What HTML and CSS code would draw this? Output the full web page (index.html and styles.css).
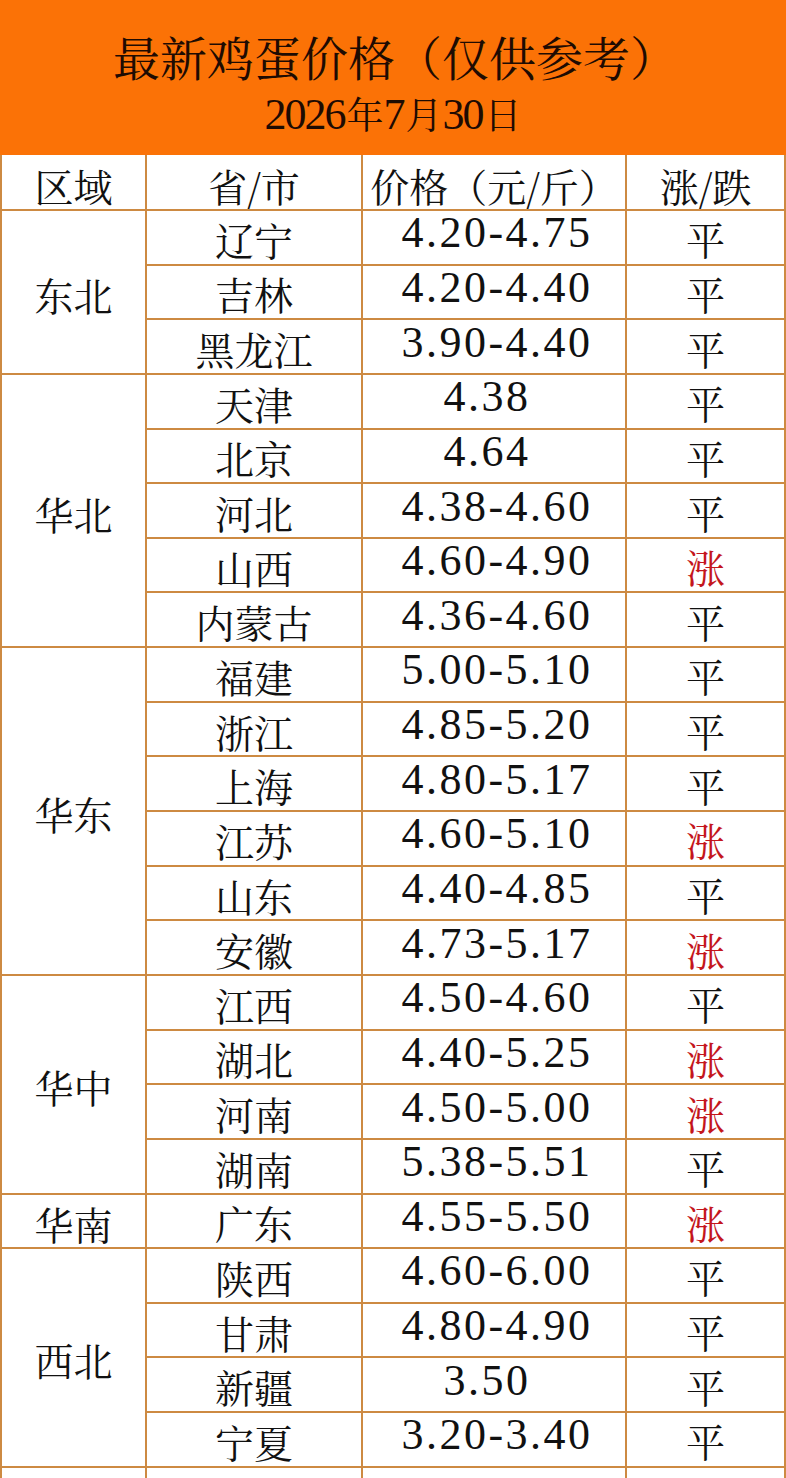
FILE: index.html
```html
<!DOCTYPE html>
<html lang="zh-CN">
<head>
<meta charset="utf-8">
<title>最新鸡蛋价格</title>
<link rel="stylesheet" href="styles.css">
</head>
<body>
<div class="banner">
  <div class="title">最新鸡蛋价格（仅供参考）</div>
  <div class="date"><span class="dnum">2026</span>年<span class="dnum">7</span>月<span class="dnum">30</span>日</div>
</div>
<div class="sheet">
  <div class="cell head">区域</div>
  <div class="cell head">省/市</div>
  <div class="cell head">价格（元/斤）</div>
  <div class="cell head">涨/跌</div>

  <div class="cell region r3">东北</div>
  <div class="cell prov">辽宁</div><div class="cell price">4.20-4.75</div><div class="cell trend">平</div>
  <div class="cell prov">吉林</div><div class="cell price">4.20-4.40</div><div class="cell trend">平</div>
  <div class="cell prov">黑龙江</div><div class="cell price">3.90-4.40</div><div class="cell trend">平</div>

  <div class="cell region r5">华北</div>
  <div class="cell prov">天津</div><div class="cell price single">4.38</div><div class="cell trend">平</div>
  <div class="cell prov">北京</div><div class="cell price single">4.64</div><div class="cell trend">平</div>
  <div class="cell prov">河北</div><div class="cell price">4.38-4.60</div><div class="cell trend">平</div>
  <div class="cell prov">山西</div><div class="cell price">4.60-4.90</div><div class="cell trend up">涨</div>
  <div class="cell prov">内蒙古</div><div class="cell price">4.36-4.60</div><div class="cell trend">平</div>

  <div class="cell region r6">华东</div>
  <div class="cell prov">福建</div><div class="cell price">5.00-5.10</div><div class="cell trend">平</div>
  <div class="cell prov">浙江</div><div class="cell price">4.85-5.20</div><div class="cell trend">平</div>
  <div class="cell prov">上海</div><div class="cell price">4.80-5.17</div><div class="cell trend">平</div>
  <div class="cell prov">江苏</div><div class="cell price">4.60-5.10</div><div class="cell trend up">涨</div>
  <div class="cell prov">山东</div><div class="cell price">4.40-4.85</div><div class="cell trend">平</div>
  <div class="cell prov">安徽</div><div class="cell price">4.73-5.17</div><div class="cell trend up">涨</div>

  <div class="cell region r4">华中</div>
  <div class="cell prov">江西</div><div class="cell price">4.50-4.60</div><div class="cell trend">平</div>
  <div class="cell prov">湖北</div><div class="cell price">4.40-5.25</div><div class="cell trend up">涨</div>
  <div class="cell prov">河南</div><div class="cell price">4.50-5.00</div><div class="cell trend up">涨</div>
  <div class="cell prov">湖南</div><div class="cell price">5.38-5.51</div><div class="cell trend">平</div>

  <div class="cell region">华南</div>
  <div class="cell prov">广东</div><div class="cell price">4.55-5.50</div><div class="cell trend up">涨</div>

  <div class="cell region r4">西北</div>
  <div class="cell prov">陕西</div><div class="cell price">4.60-6.00</div><div class="cell trend">平</div>
  <div class="cell prov">甘肃</div><div class="cell price">4.80-4.90</div><div class="cell trend">平</div>
  <div class="cell prov">新疆</div><div class="cell price single">3.50</div><div class="cell trend">平</div>
  <div class="cell prov">宁夏</div><div class="cell price">3.20-3.40</div><div class="cell trend">平</div>

  <div class="cell region"></div>
  <div class="cell prov"></div><div class="cell price"></div><div class="cell trend"></div>
</div>
</body>
</html>
```

FILE: styles.css
```css
html, body {
  margin: 0;
  padding: 0;
  overflow: hidden;
  background: #ffffff;
}

body {
  width: 786px;
  font-family: "Noto Serif CJK SC", "Noto Sans CJK SC", sans-serif;
  color: #111111;
}

.banner {
  height: 155px;
  background: #fb7206;
  display: flex;
  flex-direction: column;
  align-items: center;
  box-sizing: border-box;
  padding-top: 33px;
  color: #1e0b02;
}

.title {
  font-size: 47px;
  line-height: 46px;
  letter-spacing: 0;
  white-space: nowrap;
  padding-left: 4px;
}

.date {
  margin-top: 13px;
  font-size: 37px;
  line-height: 42px;
  white-space: nowrap;
}

.dnum {
  font-family: "Liberation Serif", serif;
  font-size: 44px;
  letter-spacing: -2px;
  margin-right: 2px;
}

.sheet {
  display: grid;
  grid-template-columns: 143px 214px 262px 157px;
  grid-template-rows: 54px repeat(24, 52.65px);
  gap: 2px;
  padding: 0 2px;
  background: #cd8a42;
}

.cell {
  background: #ffffff;
  display: flex;
  align-items: center;
  justify-content: center;
  font-size: 39px;
  line-height: 40px;
  white-space: nowrap;
}

.head {
  padding-top: 6px;
  box-sizing: border-box;
}

.region {
  padding-top: 4px;
  box-sizing: border-box;
}

.r3 { grid-row: span 3; }
.r4 { grid-row: span 4; }
.r5 { grid-row: span 5; }
.r6 { grid-row: span 6; }

.prov {
  padding-top: 3px;
  box-sizing: border-box;
}

.price {
  font-family: "Liberation Serif", serif;
  font-size: 44px;
  line-height: 44px;
  letter-spacing: 2.5px;
  padding-bottom: 8px;
  padding-left: 6px;
  box-sizing: border-box;
}

.price.single {
  padding-left: 0;
  padding-right: 14px;
}

.trend {
  padding-top: 2px;
  box-sizing: border-box;
}

.trend.up {
  color: #c4161c;
}
```
